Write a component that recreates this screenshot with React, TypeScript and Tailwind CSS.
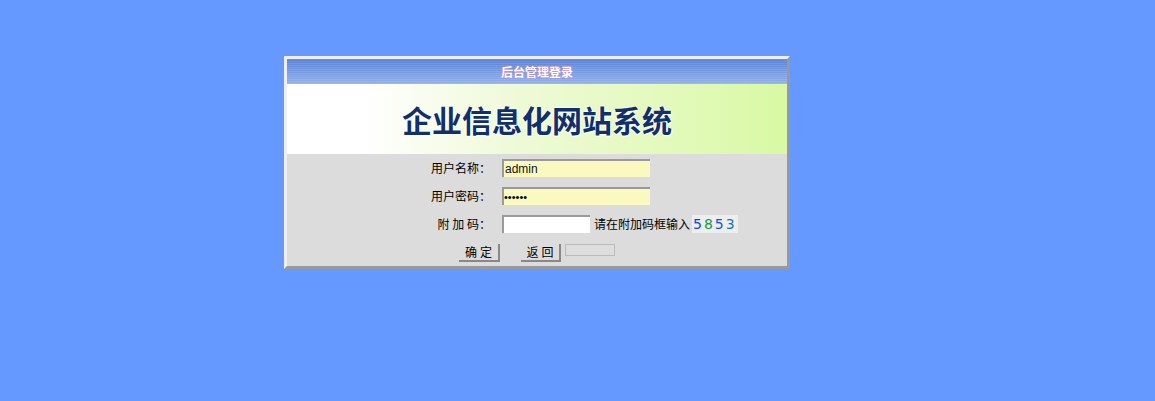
import React from "react";

const cjk = "font-['SimSun','Noto_Sans_CJK_SC',sans-serif]";

function Field({ label, children }: { label: string; children: React.ReactNode }) {
  return (
    <div className="flex items-center h-[18px]">
      <div className="w-[215px] pr-[11px] text-right text-[12px] text-black whitespace-pre">{label}</div>
      {children}
    </div>
  );
}

export default function App() {
  return (
    <div className={`w-full h-[401px] bg-[#6699ff] pt-[56px] pl-[284px] ${cjk}`}>
      <div className="w-[506px] border-[3px] border-t-[#eeeeee] border-l-[#eeeeee] border-b-[#999999] border-r-[#999999]">
        {/* 标题栏 */}
        <div className="h-[25px] flex items-center justify-center bg-[image:repeating-linear-gradient(to_bottom,rgba(255,255,255,0.1)_0px,rgba(255,255,255,0.1)_1px,transparent_1px,transparent_2px),linear-gradient(to_bottom,#5a82d6,#94b1e9)]">
          <span className="text-[12px] font-bold text-white [text-shadow:0_0_1px_#c03090,0_0_1px_#ffffff]">后台管理登录</span>
        </div>

        {/* 横幅 */}
        <div className="h-[70px] flex items-center justify-center bg-[linear-gradient(to_right,#ffffff_0%,#ffffff_15%,#effad8_45%,#d9f9a4_100%)]">
          <span className="text-[30px] font-bold text-[#10306c] [text-shadow:0_0_2px_#ffffff,0_0_2px_#ffffff,1px_1px_1px_#ffffff]">
            企业信息化网站系统
          </span>
        </div>

        {/* 表单 */}
        <div className="bg-[#dcdcdc] pt-[5px] pb-[4px] flex flex-col gap-[10px]">
          <Field label="用户名称：">
            <div className="w-[148px] h-[18px] bg-[#fafac0] border-t-2 border-l-2 border-[#9a9a9a] text-[12px] leading-[16px] pl-[1px] text-[#111] font-['Liberation_Sans',sans-serif]">
              admin
            </div>
          </Field>
          <Field label="用户密码：">
            <div className="w-[148px] h-[18px] bg-[#fafac0] border-t-2 border-l-2 border-[#9a9a9a] text-[11px] leading-[16px] text-black font-['Liberation_Sans',sans-serif]">
              ••••••
            </div>
          </Field>
          <Field label="附 加 码：">
            <div className="w-[88px] h-[18px] bg-white border-t-2 border-l-2 border-[#9a9a9a]" />
            <span className="ml-[4px] text-[12px] text-black">请在附加码框输入</span>
            <span className="ml-[2px] px-[1px] bg-[#eeeeee] h-[18px] flex items-center text-[14px] tracking-[2px] font-['DejaVu_Sans',sans-serif]">
              <span className="text-[#0a44e0]">5</span>
              <span className="text-[#119a44]">8</span>
              <span className="text-[#1452e0]">5</span>
              <span className="text-[#1178b0]">3</span>
            </span>
          </Field>
          <div className="flex items-start pl-[172px] mt-[1px]">
            <button className="w-[41px] h-[18px] border-r-2 border-b-2 border-[#888888] text-[12px] tracking-[3px] pl-[3px] leading-[16px] text-black">
              确定
            </button>
            <button className="ml-[21px] w-[40px] h-[18px] border-r-2 border-b-2 border-[#888888] text-[12px] tracking-[3px] pl-[3px] leading-[16px] text-black">
              返回
            </button>
            <div className="ml-[4px] w-[50px] h-[12px] border border-[#bbbbbb] bg-[#dddddd]" />
          </div>
        </div>
      </div>
    </div>
  );
}
